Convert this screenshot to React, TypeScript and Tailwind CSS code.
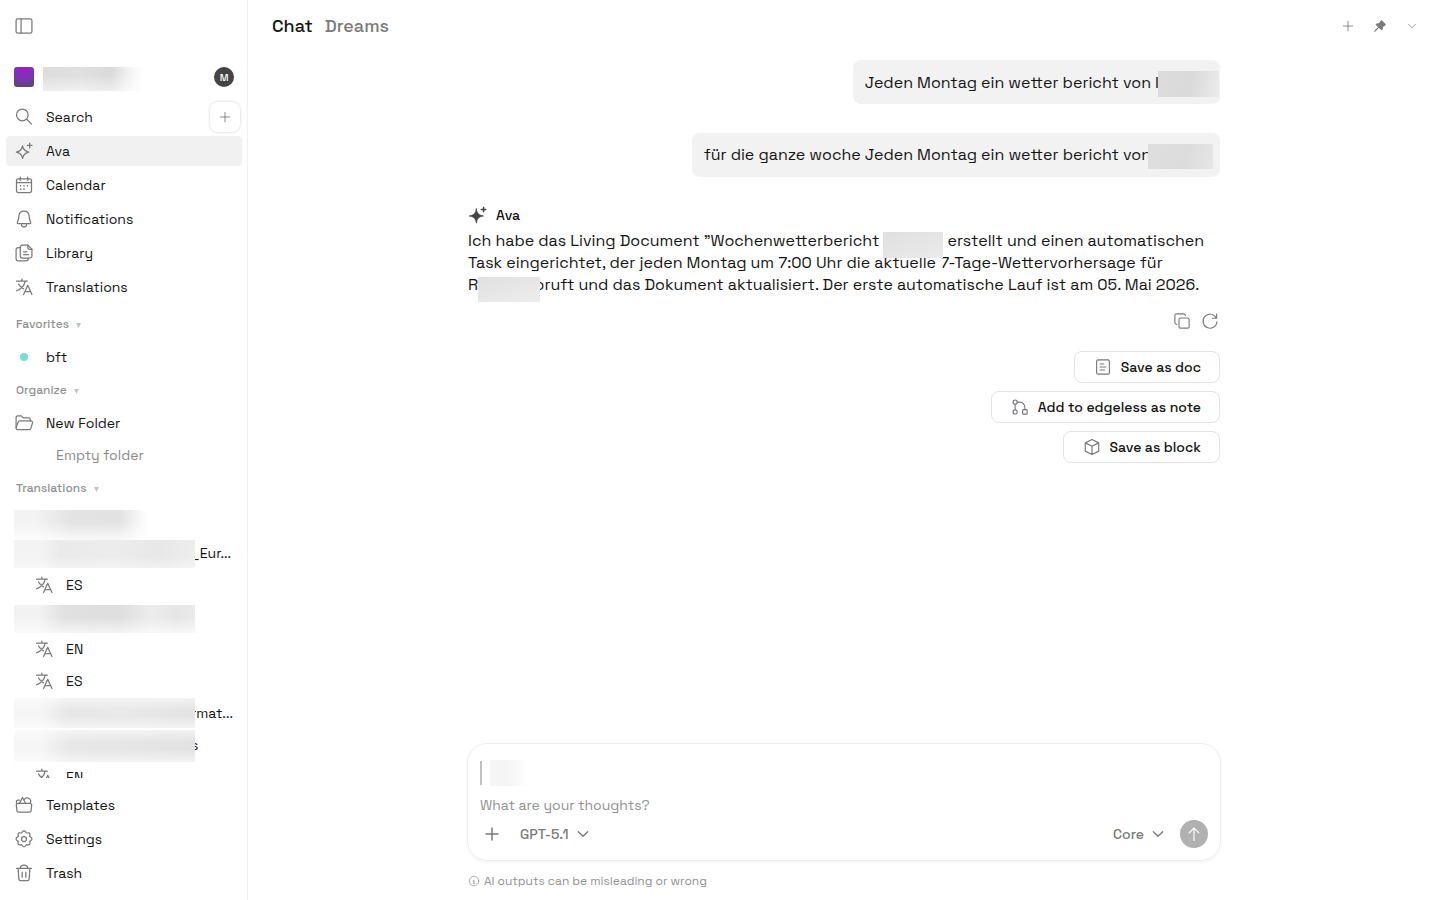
import { useState, type ReactNode } from "react";
import clsx from "clsx";

type IconProps = {
  children: ReactNode;
  className?: string;
};

function Icon({ children, className }: IconProps) {
  return (
    <svg
      viewBox="0 0 24 24"
      fill="none"
      stroke="currentColor"
      strokeWidth="1.5"
      strokeLinecap="round"
      strokeLinejoin="round"
      aria-hidden="true"
      className={clsx("shrink-0", className ?? "size-5")}
    >
      {children}
    </svg>
  );
}

const SidebarIcon = () => (
  <Icon>
    <rect x="2.5" y="3.5" width="19" height="17" rx="2" />
    <path d="M8.5 3.5v17" />
  </Icon>
);

const SearchIcon = () => (
  <Icon>
    <circle cx="10" cy="9.5" r="7" />
    <path d="m15.2 14.7 5.8 5.8" />
  </Icon>
);

const SparkIcon = () => (
  <Icon>
    <path d="M10.300 5.800c.9 4.700 2.800 6.600 7.500 7.500-4.700.9-6.600 2.800-7.500 7.500-.9-4.700-2.800-6.600-7.500-7.500 4.700-.9 6.600-2.800 7.500-7.500Z" />
    <path d="M18.800 2.500v5.600M16 5.300h5.600" />
  </Icon>
);

const SparkFilledIcon = () => (
  <Icon>
    <path
      d="M10 4.600c1 5.700 2.900 7.600 8.600 8.600-5.700 1-7.600 2.900-8.600 8.600-1-5.700-2.900-7.600-8.600-8.600 5.700-1 7.600-2.900 8.600-8.600Z"
      fill="currentColor"
      stroke="currentColor"
      strokeWidth="0.8"
    />
    <path d="M18.700 2.700v5.400M16 5.400h5.400" strokeWidth="1.8" />
  </Icon>
);

const CalendarIcon = () => (
  <Icon>
    <rect x="3" y="4.500" width="18" height="16.500" rx="2" />
    <path d="M3 9h18M7.500 2.500v4M16.500 2.500v4" />
    <path d="M12 13h.01M16 13h.01M8 13h.01M8 17h.01M12 17h.01" strokeWidth="2" />
  </Icon>
);

const BellIcon = () => (
  <Icon>
    <path d="M12 2.500c-3.700 0-6 2.700-6.200 6.200-.2 3.600-.5 5.100-1.700 7-.5.900-.2 1.800.8 1.800h14.200c1 0 1.300-.9.800-1.800-1.200-1.900-1.500-3.400-1.700-7C18 5.200 15.700 2.500 12 2.500Z" />
    <path d="M9 17.500v1a3 3 0 0 0 6 0v-1" />
  </Icon>
);

const LibraryIcon = () => (
  <Icon>
    <path d="M16.500 2.500H10A2.500 2.500 0 0 0 7.500 5v10.500A2.500 2.500 0 0 0 10 18h9a2.500 2.500 0 0 0 2.500-2.500v-8l-5-5Z" />
    <path d="M16.500 2.500v3a2 2 0 0 0 2 2h3M11.500 10.500h4M11.500 14h6" />
    <path d="M7.500 5.500H5A2.500 2.500 0 0 0 2.500 8v11A2.500 2.500 0 0 0 5 21.500h9.500A2.500 2.500 0 0 0 17 19v-1" />
  </Icon>
);

const TranslateIcon = () => (
  <Icon>
    <path d="M3 5h13M9.500 2.500V5M13.500 5c-1 5-5 9.500-10.500 11.500M5.500 8.500c1.500 2.500 3.500 4.500 6 5.700M11.500 21l5-11 5 11M13.300 17.500h6.500" />
  </Icon>
);

const FolderIcon = () => (
  <Icon>
    <path d="M2.500 17.500v-12a2 2 0 0 1 2-2h4.200l2.300 2.200h6.500a2 2 0 0 1 2 2v1.800" />
    <path d="M4.500 20h13.800a2 2 0 0 0 1.900-1.500l2-6.500a2 2 0 0 0-1.900-2.500H6.800A2 2 0 0 0 4.900 11l-2.300 6.500A2 2 0 0 0 4.500 20Z" />
  </Icon>
);

const TemplatesIcon = () => (
  <Icon>
    <path d="M4.800 10h14.400a2 2 0 0 1 2 2.200l-.7 6.500A2 2 0 0 1 18.500 20.500h-13a2 2 0 0 1-2-1.800l-.7-6.500a2 2 0 0 1 2-2.200Z" />
    <path d="M3 10.500V7.500a1.500 1.500 0 0 1 1.500-1.500h2M6.500 10l3.700-7 3.800 7M12.200 5.500a4 4 0 0 1 7 4.500" />
  </Icon>
);

const SettingsIcon = () => (
  <Icon>
    <path d="m10.200 3.200-1.100 1.600-2-.3a1.900 1.900 0 0 0-2.200 2.200l.3 2-1.600 1.100a2.300 2.300 0 0 0 0 3.900l1.500 1.100-.3 2.100a1.900 1.900 0 0 0 2.300 2.200l2-.4 1.200 1.700a2 2 0 0 0 3.400 0l1.200-1.700 2 .4a1.900 1.900 0 0 0 2.300-2.200l-.3-2.100 1.500-1.100a2.300 2.300 0 0 0 0-3.900l-1.600-1.100.3-2a1.900 1.900 0 0 0-2.200-2.200l-2 .3-1.100-1.600a2.200 2.200 0 0 0-3.600 0Z" />
    <circle cx="12" cy="12" r="3" />
  </Icon>
);

const TrashIcon = () => (
  <Icon>
    <path d="M3 6.500h18M7.500 6.500c0-2.500 1.700-4 4.500-4s4.500 1.500 4.500 4M5 6.500l.8 12.600a2.200 2.200 0 0 0 2.200 2.100h8a2.200 2.200 0 0 0 2.200-2.100L19 6.500M9.800 11v6M14.200 11v6" />
  </Icon>
);

const PlusIcon = ({ className }: { className?: string }) => (
  <Icon className={className}>
    <path d="M12 4v16M4 12h16" />
  </Icon>
);

const ChevronIcon = ({ className }: { className?: string }) => (
  <Icon className={className}>
    <path d="m5 8.500 7 7 7-7" />
  </Icon>
);

const PinIcon = () => (
  <Icon className="size-3.5">
    <path
      d="m14.500 3 6.500 6.500-1.500 1.500-.6-.2-3 3c.5 1.800.2 3.200-.9 4.500L5.500 9.500c1.300-1.100 2.700-1.400 4.500-.9l3-3-.2-.8Z"
      fill="currentColor"
      strokeWidth="2"
    />
    <path d="m10 14-7 7" strokeWidth="2" />
  </Icon>
);

const CopyIcon = () => (
  <Icon className="size-[18px]">
    <rect x="8" y="8" width="13.500" height="13.500" rx="2" />
    <path d="M5 16.500a2.500 2.500 0 0 1-2.500-2.500V5A2.500 2.500 0 0 1 5 2.500h9A2.500 2.500 0 0 1 16.500 5" />
  </Icon>
);

const RetryIcon = () => (
  <Icon className="size-[18px]">
    <path d="M20.800 2.800v5.500h-5.500M20.300 8a9.300 9.300 0 1 0 1 5" />
  </Icon>
);

const DocIcon = () => (
  <Icon className="size-[18px]">
    <rect x="3.500" y="2.500" width="17" height="19" rx="2" />
    <path d="M8 8h5M8 12h8M8 16h6" />
  </Icon>
);

const EdgelessIcon = () => (
  <Icon className="size-[18px]">
    <circle cx="5.500" cy="5.500" r="2.800" />
    <circle cx="5.500" cy="18.500" r="2.800" />
    <rect x="15.500" y="15.500" width="6" height="6" rx="1" />
    <path d="M5.500 8.300v7.400M8.300 5.500h3.200a7 7 0 0 1 7 7v3" />
  </Icon>
);

const BlockIcon = () => (
  <Icon className="size-[18px]">
    <path d="M12 2 3 6.500v11l9 4.500 9-4.500v-11L12 2ZM3 6.500l9 4.500 9-4.500M12 11v11" />
  </Icon>
);

const InfoIcon = () => (
  <Icon className="size-3">
    <circle cx="12" cy="12" r="9.500" />
    <path d="M12 11.500v5M12 7.500h.01M10.500 11.500H12M10.500 16.500h3" />
  </Icon>
);

const ArrowUpIcon = () => (
  <Icon className="size-[18px]">
    <path d="M12 20.500V4M5.500 10.500 12 4l6.500 6.500" />
  </Icon>
);

const mainNav = [
  { label: "Calendar", icon: <CalendarIcon /> },
  { label: "Notifications", icon: <BellIcon /> },
  { label: "Library", icon: <LibraryIcon /> },
  { label: "Translations", icon: <TranslateIcon /> },
];

const footerNav = [
  { label: "Templates", icon: <TemplatesIcon /> },
  { label: "Settings", icon: <SettingsIcon /> },
  { label: "Trash", icon: <TrashIcon /> },
];

type TreeRow = { lang: string } | { mask: string; tail?: string };

const translationRows: TreeRow[] = [
  {
    mask: "mt-[5px] h-[30px] bg-[linear-gradient(to_bottom,transparent_40%,#fffc),linear-gradient(to_right,#f3f3f3_12%,#e3e3e3_32%,#e2e2e2_58%,#ffffff_74%)]",
  },
  {
    mask: "mt-[3px] h-7 bg-[linear-gradient(to_bottom,transparent_60%,#fff6),linear-gradient(to_right,#f3f3f3_15%,#eaeaea_25%,#ececec_55%,#e8e8e8_80%,#ededed)]",
    tail: "_Eur...",
  },
  { lang: "ES" },
  {
    mask: "mt-1 h-7 bg-[linear-gradient(to_bottom,transparent_45%,#fffa),linear-gradient(to_right,#f2f2f2_14%,#e1e1e1_28%,#dedede_58%,#ececec_75%,#e6e6e6_90%,#eaeaea)]",
  },
  { lang: "EN" },
  { lang: "ES" },
  {
    mask: "mt-px h-[30px] bg-[linear-gradient(to_bottom,#fff8,transparent_40%,transparent_60%,#fff8),linear-gradient(to_right,#f6f6f6_14%,#e7e7e7_30%,#e9e9e9_60%,#e4e4e4)]",
    tail: "rmat...",
  },
  {
    mask: "mt-px h-8 bg-[linear-gradient(to_bottom,#fff8,transparent_40%,transparent_60%,#fff8),linear-gradient(to_right,#f6f6f6_14%,#e8e8e8_30%,#e5e5e5_70%,#e2e2e2)]",
    tail: "s",
  },
  { lang: "EN" },
];

type NavItemProps = {
  label: string;
  icon: ReactNode;
  active?: boolean;
};

function NavItem({ label, icon, active }: NavItemProps) {
  return (
    <a
      href="#"
      className={clsx(
        "flex h-[30px] items-center gap-3 rounded px-2 text-sm",
        active && "bg-[#f1f1f1]",
      )}
    >
      <span className="text-[#7a7a7a]">{icon}</span>
      {label}
    </a>
  );
}

function SectionTitle({ label }: { label: string }) {
  return (
    <button
      type="button"
      className="flex h-5 items-center gap-[7px] px-2.5 text-xs font-medium text-[#929292]"
    >
      {label}
      <svg viewBox="0 0 6 6" className="mt-0.5 size-[5px] fill-[#c4c4c4]" aria-hidden="true">
        <path d="M0 0h6L3 6Z" />
      </svg>
    </button>
  );
}

function TranslationRow({ row }: { row: TreeRow }) {
  if ("lang" in row) {
    return (
      <a href="#" className="flex h-8 items-center gap-3 pl-7 text-sm">
        <span className="text-[#7a7a7a]">
          <TranslateIcon />
        </span>
        {row.lang}
      </a>
    );
  }

  return (
    <a
      href="#"
      aria-label="Translated document"
      className="flex h-8 items-start pl-2 text-sm"
    >
      <span className={clsx("relative z-10 w-[181px] shrink-0", row.mask)} />
      <span className="-ml-1 leading-8">{row.tail}</span>
    </a>
  );
}

function Sidebar() {
  return (
    <aside className="flex w-[248px] shrink-0 flex-col border-r border-[#f0f0f0] pr-[5px] pb-3 pl-1.5">
      <div className="flex h-[52px] shrink-0 items-center px-2 text-[#7a7a7a]">
        <button type="button" aria-label="Collapse sidebar">
          <SidebarIcon />
        </button>
      </div>

      <div className="mt-2.5 flex h-[30px] shrink-0 items-center px-2">
        <button type="button" aria-label="Switch workspace" className="flex items-center gap-[9px]">
          <span className="size-5 rounded-[3px] bg-[radial-gradient(circle_at_45%_10%,#a31bc9,#7a35b0_50%,#4f4a66)]" />
          <span className="mt-1 h-6 w-[105px] bg-[linear-gradient(to_bottom,transparent_30%,#fff8),linear-gradient(to_right,#dcdcdc,#e0e0e0_35%,#dadada_65%,#f0f0f0_80%,#ffffff_95%)]" />
        </button>
        <button
          type="button"
          aria-label="Account"
          className="ml-auto flex size-5 items-center justify-center rounded-full bg-[#444444] text-[10px] font-medium text-white"
        >
          M
        </button>
      </div>

      <div className="mt-2.5 flex h-[30px] shrink-0 items-center">
        <button type="button" className="flex flex-1 items-center gap-3 px-2 text-sm">
          <span className="text-[#7a7a7a]">
            <SearchIcon />
          </span>
          Search
        </button>
        <button
          type="button"
          aria-label="New page"
          className="mr-0.5 flex size-[30px] items-center justify-center rounded-lg bg-white text-[#7a7a7a] shadow-[0_0_3px_rgba(0,0,0,0.2)]"
        >
          <PlusIcon className="size-3.5" />
        </button>
      </div>

      <nav className="mt-1 flex min-h-0 flex-1 flex-col overflow-hidden *:shrink-0">
        <NavItem label="Ava" icon={<SparkIcon />} active />
        <div className="mt-1 flex flex-col gap-1">
          {mainNav.map((item) => (
            <NavItem key={item.label} {...item} />
          ))}
        </div>

        <div className="mt-3 flex flex-col gap-2">
          <SectionTitle label="Favorites" />
          <NavItem
            label="bft"
            icon={
              <span className="flex size-5 items-center justify-center">
                <span className="size-2 rounded-full bg-[#74e0d0]" />
              </span>
            }
          />
          <SectionTitle label="Organize" />
          <NavItem label="New Folder" icon={<FolderIcon />} />
        </div>
        <p className="mt-0.5 pl-[50px] text-sm leading-[30px] text-[#8a8a8a]">Empty folder</p>

        <div className="mt-2">
          <SectionTitle label="Translations" />
        </div>
        <div className="mt-[7px]">
          {translationRows.map((row, index) => (
            <TranslationRow key={index} row={row} />
          ))}
        </div>
      </nav>

      <nav className="mt-3 flex shrink-0 flex-col gap-1">
        {footerNav.map((item) => (
          <NavItem key={item.label} {...item} />
        ))}
      </nav>
    </aside>
  );
}

function ActionButton({ label, icon }: { label: string; icon: ReactNode }) {
  return (
    <button
      type="button"
      className="flex h-8 items-center gap-2 rounded-lg border border-[#e3e3e3] px-[18px] text-sm font-medium"
    >
      <span className="flex size-5 items-center justify-center text-[#77757d]">{icon}</span>
      {label}
    </button>
  );
}

function Composer() {
  const [text, setText] = useState("");

  return (
    <form
      onSubmit={(event) => event.preventDefault()}
      className="-mx-px rounded-[20px] border border-[#ededed] p-3 shadow-[0_1px_3px_rgba(0,0,0,0.06)]"
    >
      <div className="mt-1 flex h-[26px] items-center gap-2">
        <span className="h-6 w-0.5 bg-[#c0bfc1]" />
        <span className="h-[26px] w-12 bg-[linear-gradient(to_right,#f5f5f5_40%,#ffffff_80%)]" />
      </div>
      <input
        type="text"
        aria-label="Message"
        placeholder="What are your thoughts?"
        value={text}
        onChange={(event) => setText(event.target.value)}
        className="mt-[7px] block h-6 w-full text-sm outline-none placeholder:text-[#929292]"
      />
      <div className="mt-[3px] flex h-7 items-center text-[#7a7a7a]">
        <button type="button" aria-label="Attach" className="flex size-6 items-center justify-center">
          <PlusIcon className="size-[18px] stroke-2" />
        </button>
        <label className="ml-4 flex items-center gap-1.5">
          <select
            aria-label="Model"
            className="field-sizing-content appearance-none text-sm font-medium outline-none"
          >
            <option>GPT-5.1</option>
          </select>
          <ChevronIcon className="size-4 stroke-2" />
        </label>
        <label className="ml-auto flex items-center gap-1.5">
          <select
            aria-label="Tools"
            className="field-sizing-content appearance-none text-sm font-medium outline-none"
          >
            <option>Core</option>
          </select>
          <ChevronIcon className="size-4 stroke-2" />
        </label>
        <button
          type="submit"
          aria-label="Send"
          className="ml-3.5 flex size-7 items-center justify-center rounded-full bg-[#b1b1b1] text-white"
        >
          <ArrowUpIcon />
        </button>
      </div>
    </form>
  );
}

export default function App() {
  return (
    <div className="flex h-screen bg-white font-['Space_Grotesk','Inter',sans-serif] text-[#141414]">
      <Sidebar />

      <main className="flex min-w-0 flex-1 flex-col">
        <header className="flex h-[52px] shrink-0 items-center pr-5 pl-6">
          <div className="flex gap-3 text-lg font-medium">
            <button type="button">Chat</button>
            <button type="button" className="text-[#7a7a7a]">
              Dreams
            </button>
          </div>
          <div className="ml-auto flex items-center gap-4 text-[#7a7a7a]">
            <button type="button" aria-label="New chat" className="flex size-4 items-center justify-center">
              <PlusIcon className="size-3.5" />
            </button>
            <button type="button" aria-label="Pin chat" className="flex size-4 items-center justify-center">
              <PinIcon />
            </button>
            <button type="button" aria-label="Chat history" className="flex size-4 items-center justify-center">
              <ChevronIcon className="size-3" />
            </button>
          </div>
        </header>

        <div className="mx-auto flex min-h-0 w-full max-w-[752px] flex-1 flex-col pt-2">
          <section className="flex min-h-0 flex-1 flex-col items-end">
            <div className="flex h-11 items-center rounded-lg bg-[#f2f2f2] pt-px pr-px pl-3">
              <span>Jeden Montag ein wetter bericht von I</span>
              <span className="relative -ml-px mt-0.5 h-[26px] w-[61px] bg-[linear-gradient(100deg,#dcdcdc,#dadada_55%,#ececec)]" />
            </div>
            <div className="mt-[29px] flex h-11 items-center rounded-lg bg-[#f2f2f2] pr-[7px] pl-3">
              <span>für die ganze woche Jeden Montag ein wetter bericht von</span>
              <span className="relative -ml-[3px] mt-0.5 h-[25px] w-[65px] bg-[linear-gradient(100deg,#dedede,#dcdcdc_60%,#e6e6e6)]" />
            </div>

            <article className="mt-7 w-full">
              <h2 className="flex h-5 items-center gap-2 text-sm font-medium">
                <span className="text-[#444444]">
                  <SparkFilledIcon />
                </span>
                Ava
              </h2>
              <p className="mt-[5px] leading-[22px] whitespace-nowrap">
                Ich habe das Living Document ”Wochenwetterbericht{" "}
                <span className="relative mt-0.5 -mb-1.5 inline-block h-[26px] w-[60px] bg-[linear-gradient(160deg,#e0e0e0,#eaeaea)] align-top" />{" "}
                erstellt und einen automatischen
                <br />
                Task eingerichtet, der jeden Montag um 7:00 Uhr die aktuelle 7-Tage-Wettervorhersage für
                <br />R
                <span className="relative mt-[3px] -mr-1.5 -mb-1.5 inline-block h-[25px] w-[62px] bg-[linear-gradient(160deg,#e0e0e0,#ededed)] align-top" />
                pruft und das Dokument aktualisiert. Der erste automatische Lauf ist am 05. Mai 2026.
              </p>
            </article>

            <div className="mt-[15px] flex gap-2 text-[#7a7a7a]">
              <button type="button" aria-label="Copy" className="flex size-5 items-center justify-center">
                <CopyIcon />
              </button>
              <button type="button" aria-label="Retry" className="flex size-5 items-center justify-center">
                <RetryIcon />
              </button>
            </div>

            <div className="mt-5 flex flex-col items-end gap-2">
              <ActionButton label="Save as doc" icon={<DocIcon />} />
              <ActionButton label="Add to edgeless as note" icon={<EdgelessIcon />} />
              <ActionButton label="Save as block" icon={<BlockIcon />} />
            </div>
          </section>

          <Composer />
          <p className="mt-3 mb-[11px] flex items-center gap-1 text-xs text-[#929292]">
            <InfoIcon />
            AI outputs can be misleading or wrong
          </p>
        </div>
      </main>
    </div>
  );
}
